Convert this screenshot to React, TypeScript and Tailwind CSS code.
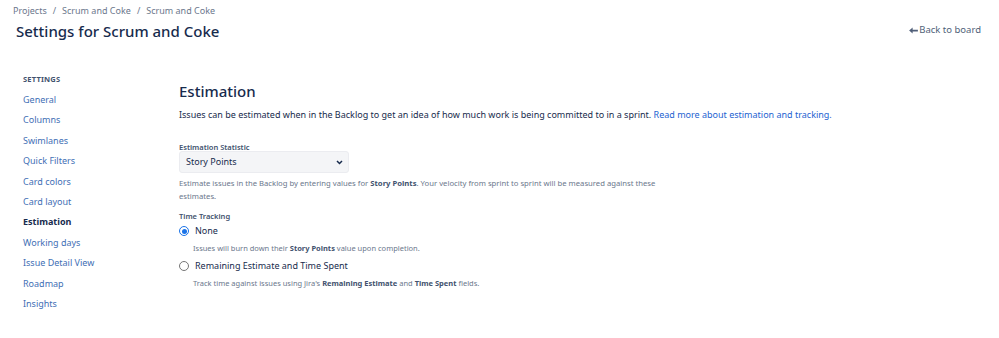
import { useState } from 'react'

const navItems = [
  'General',
  'Columns',
  'Swimlanes',
  'Quick Filters',
  'Card colors',
  'Card layout',
  'Estimation',
  'Working days',
  'Issue Detail View',
  'Roadmap',
  'Insights',
]

function Radio({ checked }: { checked: boolean }) {
  return checked ? (
    <span className="flex h-[10px] w-[10px] shrink-0 items-center justify-center rounded-full border-[1.5px] border-[#1a73e8] bg-white">
      <span className="h-[5px] w-[5px] rounded-full bg-[#1a73e8]" />
    </span>
  ) : (
    <span className="h-[10px] w-[10px] shrink-0 rounded-full border border-[#767676] bg-white" />
  )
}

export default function App() {
  const [tracking, setTracking] = useState('none')

  return (
    <div className="min-h-[338px] w-[999px] bg-white text-[#172b4d] font-['Noto_Sans',sans-serif]">
      {/* Header */}
      <div className="px-[13px] pt-[4px]">
        <div className="flex items-center gap-[6px] text-[9px] leading-[14px] text-[#6b778c]">
          <span>Projects</span>
          <span>/</span>
          <span>Scrum and Coke</span>
          <span>/</span>
          <span>Scrum and Coke</span>
        </div>
        <div className="mt-[1px] flex items-center justify-between pl-[3px] pr-[5px]">
          <h1 className="text-[15px] font-medium leading-[24px] text-[#172b4d]">Settings for Scrum and Coke</h1>
          <a className="-mt-[2px] flex items-center gap-[1px] text-[9.5px] text-[#505f79]">
            <svg width="9" height="7" viewBox="0 0 10 8" fill="#505f79">
              <path d="M0 4 L4 0.5 V3 H10 V5 H4 V7.5 Z" />
            </svg>
            Back to board
          </a>
        </div>
      </div>

      <div className="mt-[30px] flex">
        {/* Sidebar */}
        <div className="w-[179px] shrink-0 pl-[23px]">
          <div className="text-[7.5px] font-bold leading-[12px] tracking-[0.2px] text-[#42526e]">SETTINGS</div>
          <ul className="mt-[5px]">
            {navItems.map((item) => (
              <li
                key={item}
                className={
                  item === 'Estimation'
                    ? 'h-[20.4px] text-[9px] font-bold leading-[20px] text-[#172b4d]'
                    : 'h-[20.4px] text-[9px] leading-[20px] text-[#3f6fb5]'
                }
              >
                {item}
              </li>
            ))}
          </ul>
        </div>

        {/* Main */}
        <div className="flex-1">
          <h2 className="mt-[6px] text-[15px] font-medium leading-[24px]">Estimation</h2>
          <p className="mt-[5px] text-[9px] leading-[14px] text-[#172b4d]">
            Issues can be estimated when in the Backlog to get an idea of how much work is being committed to in a sprint.{' '}
            <a className="text-[#1d63d1]">Read more about estimation and tracking.</a>
          </p>

          <div className="mt-[20px] text-[7.5px] font-semibold leading-[10px] text-[#42526e]">Estimation Statistic</div>
          <div className="-mt-[1px] flex h-[22px] w-[170px] items-center justify-between rounded-[3px] border border-[#ebecf0] bg-[#f4f5f7] pl-[6px] pr-[5px] text-[9px]">
            <span>Story Points</span>
            <svg width="7" height="5" viewBox="0 0 7 5" fill="none" stroke="#172b4d" strokeWidth="1.5">
              <path d="M1 1 L3.5 3.5 L6 1" />
            </svg>
          </div>
          <p className="mt-[4px] w-[485px] text-[7.7px] leading-[13px] text-[#6b778c]">
            Estimate issues in the Backlog by entering values for <b className="text-[#42526e]">Story Points</b>. Your velocity from sprint to sprint will be measured against these estimates.
          </p>

          <div className="mt-[8px] text-[7.5px] font-semibold leading-[10px] text-[#42526e]">Time Tracking</div>
          <label className="mt-[3px] flex items-center gap-[6px] text-[9px] leading-[14px]" onClick={() => setTracking('none')}>
            <Radio checked={tracking === 'none'} />
            None
          </label>
          <p className="mt-[4px] pl-[14px] text-[7.5px] leading-[12px] text-[#6b778c]">
            Issues will burn down their <b className="text-[#42526e]">Story Points</b> value upon completion.
          </p>
          <label className="mt-[5px] flex items-center gap-[6px] text-[9px] leading-[14px]" onClick={() => setTracking('time')}>
            <Radio checked={tracking === 'time'} />
            Remaining Estimate and Time Spent
          </label>
          <p className="mt-[4px] pl-[14px] text-[7.5px] leading-[12px] text-[#6b778c]">
            Track time against issues using Jira's <b className="text-[#42526e]">Remaining Estimate</b> and <b className="text-[#42526e]">Time Spent</b> fields.
          </p>
        </div>
      </div>
    </div>
  )
}
